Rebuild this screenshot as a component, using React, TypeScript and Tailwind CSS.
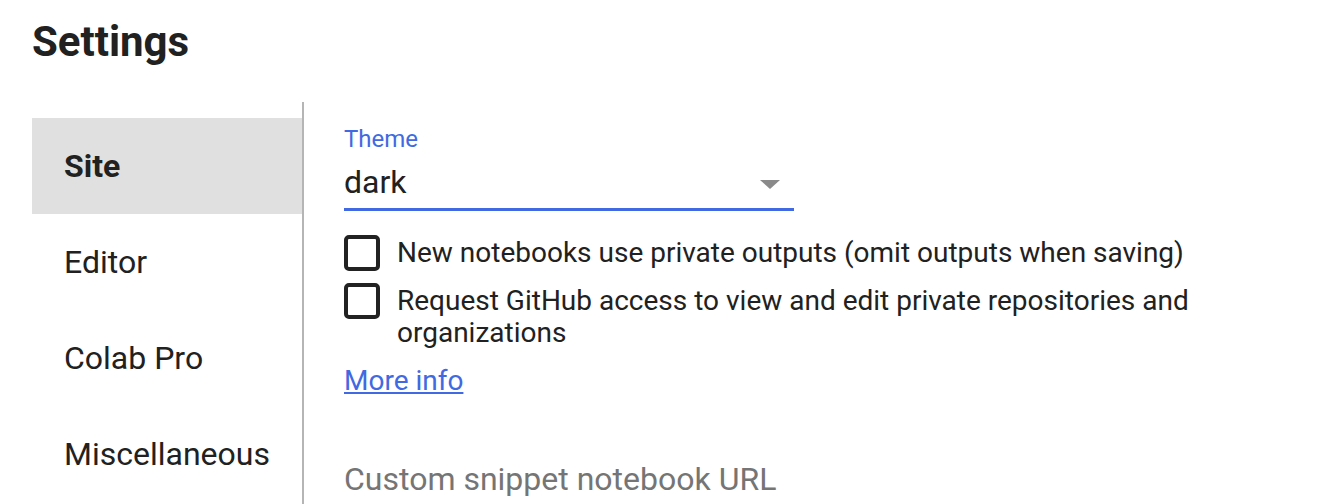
import React, { useState } from 'react';

const navItems = ['Site', 'Editor', 'Colab Pro', 'Miscellaneous'];

export default function App() {
  const [active, setActive] = useState('Site');
  const [privateOutputs, setPrivateOutputs] = useState(false);
  const [githubAccess, setGithubAccess] = useState(false);

  return (
    <div className="min-h-screen bg-white pl-[32px] text-[#212121] font-['Roboto',sans-serif]">
      <h1 className="pt-[18px] text-[42px] font-bold leading-[48px]">Settings</h1>

      <div className="mt-[36px] flex">
        {/* Sidebar */}
        <nav className="w-[272px] shrink-0 border-r-2 border-[#b5b5b5] pt-[16px] min-h-[410px]">
          {navItems.map((item) => (
            <button
              key={item}
              onClick={() => setActive(item)}
              className={`flex h-[96px] w-full items-center pl-[32px] text-left text-[32px] leading-[40px] ${
                active === item ? 'bg-[#e0e0e0] font-bold' : ''
              }`}
            >
              {item}
            </button>
          ))}
        </nav>

        {/* Content */}
        <main className="pl-[40px] pt-[23px]">
          <div className="w-[450px] border-b-[3px] border-[#4169e1] pb-[6px]">
            <div className="text-[24px] leading-[28px] text-[#4169e1]">Theme</div>
            <div className="mt-[9px] flex items-center justify-between">
              <span className="text-[32px] leading-[40px]">dark</span>
              <span className="mr-[14px] mt-[4px] h-0 w-0 border-x-[10px] border-t-[9px] border-x-transparent border-t-[#8a8a8a]" />
            </div>
          </div>

          <div className="mt-[24px] flex flex-col gap-[12px]">
            <label className="flex items-start gap-[17px] cursor-pointer">
              <input type="checkbox" checked={privateOutputs} onChange={(e) => setPrivateOutputs(e.target.checked)} className="hidden" />
              <span className="h-[36px] w-[36px] shrink-0 rounded-[5px] border-[4px] border-[#222]" />
              <span className="mt-[2px] text-[28px] leading-[32px]">New notebooks use private outputs (omit outputs when saving)</span>
            </label>
            <label className="flex items-start gap-[17px] cursor-pointer">
              <input type="checkbox" checked={githubAccess} onChange={(e) => setGithubAccess(e.target.checked)} className="hidden" />
              <span className="h-[36px] w-[36px] shrink-0 rounded-[5px] border-[4px] border-[#222]" />
              <span className="mt-[2px] w-[800px] text-[28px] leading-[32px]">
                Request GitHub access to view and edit private repositories and organizations
              </span>
            </label>
          </div>

          <a href="#" className="mt-[16px] block w-fit text-[28px] leading-[32px] text-[#4169e1] underline">
            More info
          </a>

          <div className="mt-[62px] text-[32px] leading-[40px] text-[#757575]">Custom snippet notebook URL</div>
        </main>
      </div>
    </div>
  );
}
